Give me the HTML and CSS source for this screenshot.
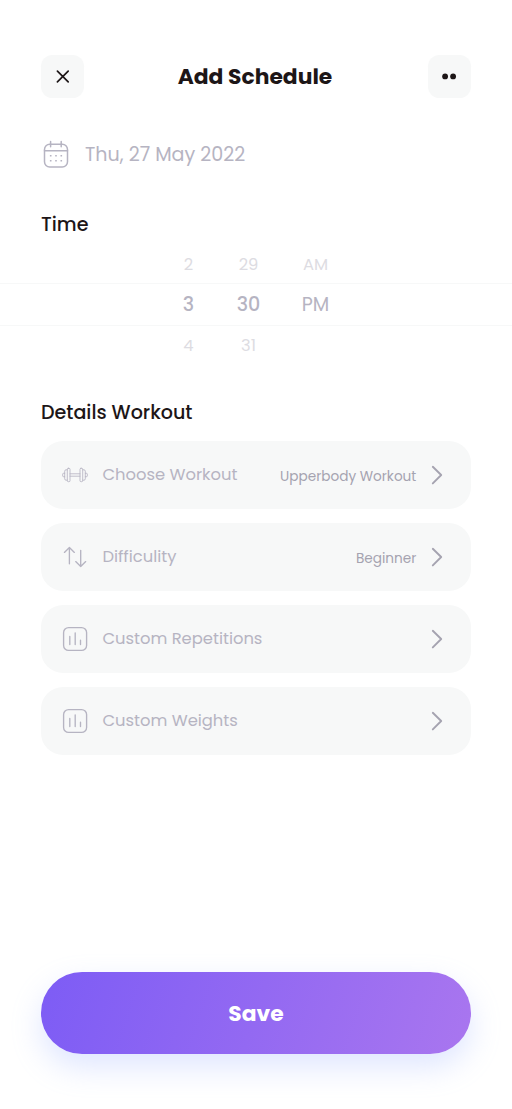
FILE: index.html
```html
<!DOCTYPE html>
<html lang="en">
<head>
<meta charset="utf-8">
<title>Add Schedule</title>
<link rel="stylesheet" href="styles.css">
</head>
<body>
<main class="screen">
  <header class="topbar">
    <button class="square" aria-label="Close"><svg width="43" height="43" viewBox="0 0 43 43"><path d="M16.4 16.1l10.8 10.8M27.2 16.1l-10.8 10.8" fill="none" stroke="#1d1617" stroke-width="1.7" stroke-linecap="round"/></svg></button>
    <h1 class="title">Add Schedule</h1>
    <button class="square" aria-label="More"><svg width="43" height="43" viewBox="0 0 43 43"><circle cx="17.1" cy="21.4" r="2.9" fill="#1d1617"/><circle cx="25.1" cy="21.4" r="2.9" fill="#1d1617"/></svg></button>
  </header>

  <div class="date">
    <svg class="line-icon" width="30" height="30" viewBox="0 0 30 30"><rect x="3.5" y="4.2" width="23" height="22.8" rx="5.2"/><path d="M3.5 10.8h23M9.6 1.5v5.2M20.2 1.5v5.2"/><path class="dots" d="M8.9 15.7h1.6M14.2 15.7h1.6M19.5 15.7h1.6M8.9 20.7h1.6M14.2 20.7h1.6M19.5 20.7h1.6"/></svg>
    <span class="date-text">Thu, 27 May 2022</span>
  </div>

  <h2 class="section time-heading">Time</h2>
  <div class="wheel">
    <div class="wheel-row"><span>2</span><span>29</span><span>AM</span></div>
    <div class="wheel-row selected"><span>3</span><span>30</span><span class="period">PM</span></div>
    <div class="wheel-row next"><span>4</span><span>31</span><span></span></div>
  </div>

  <h2 class="section details-heading">Details Workout</h2>
  <div class="options">
    <div class="option">
      <svg class="line-icon thin" width="28" height="28" viewBox="0 0 28 28"><rect x="6.3" y="7.3" width="2.7" height="13.4" rx="1"/><path d="M6.3 8.8H5.1q-1.4 0-1.4 1.4v7.6q0 1.4 1.4 1.4h1.2M3.7 12.3H2.5q-.8 0-.8.8v1.8q0 .8.8.8h1.2M9 12.8h10M9 15.2h10M21.7 8.8h1.2q1.4 0 1.4 1.4v7.6q0 1.4-1.4 1.4h-1.2M24.3 12.3h1.2q.8 0 .8.8v1.8q0 .8-.8.8h-1.2"/><rect x="19" y="7.3" width="2.7" height="13.4" rx="1"/></svg>
      <span class="label">Choose Workout</span><span class="value">Upperbody Workout</span>
      <svg class="chevron" width="14" height="22" viewBox="0 0 14 22"><path d="M2.8 2.8l8.4 8.2-8.4 8.4"/></svg>
    </div>
    <div class="option">
      <svg class="line-icon" width="28" height="28" viewBox="0 0 28 28"><path d="M8.4 20.7V4.5M3.4 9.4l5-4.9 5 4.9M19.7 7.3v16.2M14.7 18.6l5 4.9 5-4.9"/></svg>
      <span class="label">Difficulity</span><span class="value">Beginner</span>
      <svg class="chevron" width="14" height="22" viewBox="0 0 14 22"><path d="M2.8 2.8l8.4 8.2-8.4 8.4"/></svg>
    </div>
    <div class="option">
      <svg class="line-icon" width="28" height="28" viewBox="0 0 28 28"><rect x="2.6" y="2.6" width="23" height="22.8" rx="5"/><path d="M8.8 11.4v8.2M14.2 7.8v11.8M19.5 15.2v4.4"/></svg>
      <span class="label">Custom Repetitions</span>
      <svg class="chevron" width="14" height="22" viewBox="0 0 14 22"><path d="M2.8 2.8l8.4 8.2-8.4 8.4"/></svg>
    </div>
    <div class="option">
      <svg class="line-icon" width="28" height="28" viewBox="0 0 28 28"><rect x="2.6" y="2.6" width="23" height="22.8" rx="5"/><path d="M8.8 11.4v8.2M14.2 7.8v11.8M19.5 15.2v4.4"/></svg>
      <span class="label">Custom Weights</span>
      <svg class="chevron" width="14" height="22" viewBox="0 0 14 22"><path d="M2.8 2.8l8.4 8.2-8.4 8.4"/></svg>
    </div>
  </div>

  <button class="save"><span>Save</span></button>
</main>
</body>
</html>
```

FILE: styles.css
```css
* { box-sizing: border-box; }
body { margin: 0; background: #fff; color: #1d1617; font-family: Poppins, Inter, "Open Sans", sans-serif; }
button { border: 0; padding: 0; font: inherit; }
svg { display: block; flex: none; }
.screen { display: flex; flex-direction: column; height: 1109px; padding: 55px 41px; overflow: hidden; }
.topbar { display: flex; align-items: center; justify-content: space-between; height: 43px; }
.square { width: 43.4px; height: 43px; border-radius: 11.5px; background: #f7f8f8; overflow: hidden; }
.title { margin: 0 2px 0 0; font-size: 21.84px; line-height: 44px; font-weight: 700; white-space: nowrap; }
.date { display: flex; align-items: center; gap: 14px; height: 30px; margin-top: 41.5px; color: #b6b4c2; }
.date-text { font-size: 19.1px; line-height: 28px; padding-top: 1px; white-space: nowrap; }
.line-icon { fill: none; stroke: #b6b4c2; stroke-width: 1.35; stroke-linecap: round; stroke-linejoin: round; }
.date .line-icon { stroke-width: 1.5; }
.line-icon .dots { stroke-width: 1.4; stroke-linecap: butt; }
.line-icon.thin { stroke-width: .85; }
.section { margin: 0; font-size: 19.1px; line-height: 30px; font-weight: 500; }
.time-heading { margin-top: 40.5px; }
.wheel { margin: 4px -41px 0; }
.wheel-row { display: grid; grid-template-columns: 60px 60px 74px; justify-content: center; height: 39px; align-items: center; text-align: center; font-size: 16.38px; color: #dddce2; padding: 1px 1px 0 0; }
.wheel-row.selected { height: 43px; padding-top: 0; border-top: 1px solid #f7f8f8; border-bottom: 1px solid #f7f8f8; font-size: 19.1px; font-weight: 500; color: #b6b4c2; }
.wheel-row.next { padding: 0 1px 1px 0; }
.wheel-row .period { font-weight: 400; }
.details-heading { margin-top: 33px; }
.options { display: grid; gap: 14px; margin-top: 13px; }
.option { display: flex; align-items: center; height: 68px; padding: 0 27px 0 20px; border-radius: 22px; background: #f7f8f8; }
.label { margin: 0 0 1px 13.4px; font-size: 16.38px; color: #b6b4c2; white-space: nowrap; }
.value { margin: 3px 0 0 auto; font-size: 13.65px; color: #a5a3b0; white-space: nowrap; }
.chevron { margin-left: auto; fill: none; stroke: #a5a3b0; stroke-width: 1.9; stroke-linecap: round; stroke-linejoin: round; }
.value + .chevron { margin-left: 13.7px; }
.save { height: 82px; margin-top: auto; border-radius: 41px; color: #fff; font-size: 21.84px; font-weight: 700; background: linear-gradient(108deg, #7d5cf5 0%, #a976ef 100%); box-shadow: 0 13px 30px rgba(149, 173, 254, .3); }
```
